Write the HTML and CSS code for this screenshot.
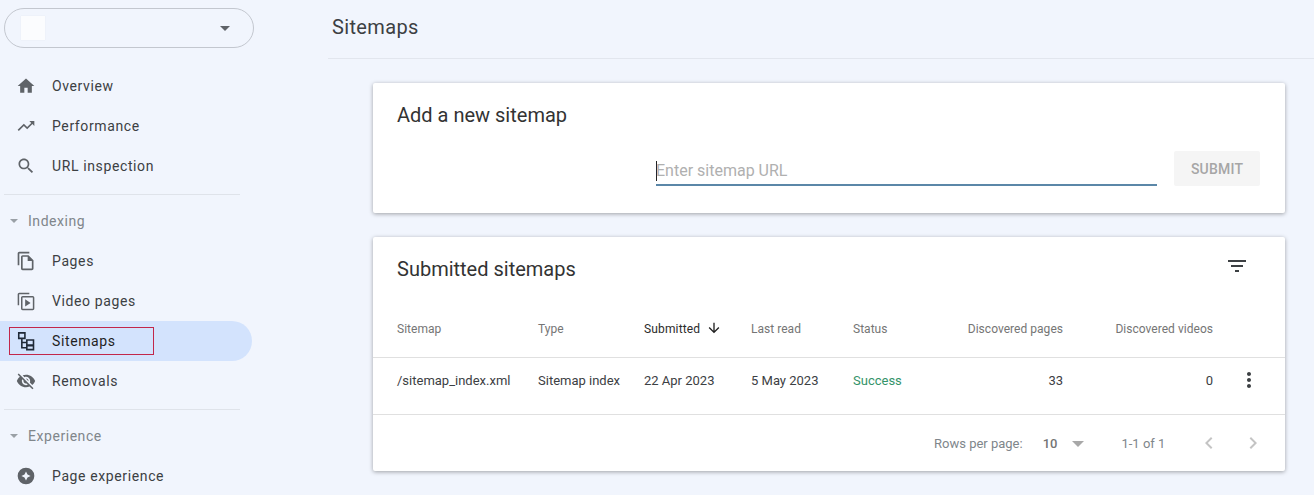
FILE: index.html
```html
<!DOCTYPE html>
<html lang="en">
<head>
<meta charset="utf-8">
<title>Sitemaps</title>
<link rel="stylesheet" href="styles.css">
</head>
<body>
<div class="app">
  <aside class="sidebar">
    <div class="property">
      <span class="logo"></span>
      <span class="caret"></span>
    </div>
    <nav class="nav">
      <a class="item"><svg class="icon" viewBox="0 0 24 24"><path d="M10 20v-6h4v6h5v-8h3L12 3 2 12h3v8z"/></svg>Overview</a>
      <a class="item"><svg class="icon" viewBox="0 0 24 24"><path d="M16 6l2.29 2.29-4.88 4.88-4-4L2 16.59 3.41 18l6-6 4 4 6.3-6.29L22 12V6z"/></svg>Performance</a>
      <a class="item"><svg class="icon" viewBox="0 0 24 24"><path d="M15.5 14h-.79l-.28-.27C15.41 12.59 16 11.11 16 9.5 16 5.91 13.09 3 9.5 3S3 5.91 3 9.5 5.91 16 9.5 16c1.61 0 3.09-.59 4.23-1.57l.27.28v.79l5 4.99L20.49 19l-4.99-5zm-6 0C7.01 14 5 11.99 5 9.5S7.01 5 9.5 5 14 7.01 14 9.5 11.99 14 9.5 14z"/></svg>URL inspection</a>
      <div class="divider"></div>
      <div class="section"><span class="tri"></span>Indexing</div>
      <a class="item"><svg class="icon" viewBox="0 0 24 24"><path d="M16 1H4c-1.1 0-2 .9-2 2v14h2V3h12V1zm-1 4H8c-1.1 0-1.99.9-1.99 2L6 21c0 1.1.89 2 1.99 2H19c1.1 0 2-.9 2-2V11l-6-6zM8 21V7h6v5h5v9H8z"/></svg>Pages</a>
      <a class="item"><svg class="icon" viewBox="0 0 24 24"><path d="M16 2H4c-1.1 0-2 .9-2 2v13h1.800V3.800H16zM20 6H8c-1.1 0-2 .9-2 2v13c0 1.100.9 2 2 2h12c1.100 0 2-.9 2-2V8c0-1.100-.9-2-2-2zm.2 15.200H7.800V7.800h12.400zM11 10v8.500l6.500-4.250z"/></svg>Video pages</a>
      <a class="item active"><svg class="icon icon-tree" viewBox="0 0 24 24"><path d="M3.300 2.200h7.400v6.600H3.300zM7 8.800v11.200h6M7 13.800h6M13 10.800h8v6h-8zM13 17.500h8v4.800h-8z"/></svg>Sitemaps<span class="highlight"></span></a>
      <a class="item"><svg class="icon" viewBox="0 0 24 24"><path d="M12 7c2.76 0 5 2.24 5 5 0 .65-.13 1.26-.36 1.83l2.92 2.92c1.51-1.26 2.7-2.89 3.43-4.75-1.73-4.39-6-7.5-11-7.5-1.4 0-2.74.25-3.98.7l2.16 2.16C10.74 7.13 11.35 7 12 7zM2 4.27l2.28 2.28.46.46C3.08 8.3 1.78 10.02 1 12c1.73 4.39 6 7.5 11 7.5 1.55 0 3.03-.3 4.38-.84l.42.42L19.73 22 21 20.73 3.27 3 2 4.27zM7.53 9.8l1.55 1.55c-.05.21-.08.43-.08.65 0 1.66 1.34 3 3 3 .22 0 .44-.03.65-.08l1.55 1.55c-.67.33-1.41.53-2.2.53-2.76 0-5-2.24-5-5 0-.79.2-1.53.53-2.2zm4.31-.78l3.15 3.15.02-.16c0-1.66-1.34-3-3-3l-.17.01z"/></svg>Removals</a>
      <div class="divider"></div>
      <div class="section"><span class="tri"></span>Experience</div>
      <a class="item"><svg class="icon" viewBox="0 0 24 24"><path fill-rule="evenodd" d="M12 2a10 10 0 1 0 0 20 10 10 0 0 0 0-20zm0 4.500 1.800 3.700 3.700 1.800-3.700 1.800-1.800 3.700-1.800-3.700L6.500 12l3.700-1.800z"/></svg>Page experience</a>
    </nav>
  </aside>
  <main class="main">
    <header class="topbar"><h1 class="page-title">Sitemaps</h1></header>
    <div class="content">
      <section class="card add-card">
        <h2 class="card-title">Add a new sitemap</h2>
        <div class="add-row">
          <div class="field"><span class="cursor"></span><span class="placeholder">Enter sitemap URL</span></div>
          <button class="submit">SUBMIT</button>
        </div>
      </section>
      <section class="card list-card">
        <div class="list-head">
          <h2 class="card-title">Submitted sitemaps</h2>
          <svg class="filter" viewBox="0 0 24 24"><path d="M10 18h4v-2h-4v2zM3 6v2h18V6H3zm3 7h12v-2H6v2z"/></svg>
        </div>
        <div class="row head-row">
          <span>Sitemap</span>
          <span>Type</span>
          <span class="sorted">Submitted<svg class="arrow" viewBox="0 0 24 24"><path d="M20 12l-1.410-1.410L13 16.170V4h-2v12.170l-5.580-5.590L4 12l8 8z"/></svg></span>
          <span>Last read</span>
          <span>Status</span>
          <span class="num">Discovered pages</span>
          <span class="num">Discovered videos</span>
          <span></span>
        </div>
        <div class="row data-row">
          <span>/sitemap_index.xml</span>
          <span>Sitemap index</span>
          <span>22 Apr 2023</span>
          <span>5 May 2023</span>
          <span class="success">Success</span>
          <span class="num">33</span>
          <span class="num">0</span>
          <svg class="more" viewBox="0 0 24 24"><path d="M12 8c1.100 0 2-.9 2-2s-.9-2-2-2-2 .9-2 2 .9 2 2 2zm0 2c-1.100 0-2 .9-2 2s.9 2 2 2 2-.9 2-2-.9-2-2-2zm0 6c-1.100 0-2 .9-2 2s.9 2 2 2 2-.9 2-2-.9-2-2-2z"/></svg>
        </div>
        <div class="pager">
          <span class="rows-label">Rows per page:</span>
          <span class="rows-value">10</span>
          <span class="rows-caret"></span>
          <span class="range">1-1 of 1</span>
          <svg class="chev" viewBox="0 0 24 24"><path d="M15.410 7.410L14 6l-6 6 6 6 1.410-1.410L10.830 12z"/></svg>
          <svg class="chev" viewBox="0 0 24 24"><path d="M10 6L8.590 7.410 13.170 12l-4.580 4.590L10 18l6-6z"/></svg>
        </div>
      </section>
    </div>
  </main>
</div>
</body>
</html>
```

FILE: styles.css
```css
* { box-sizing: border-box; }
html, body { margin: 0; height: 495px; overflow: hidden; }
body { background: #f1f5fd; font-family: Roboto, "Liberation Sans", sans-serif; color: #3c4043; }

.app { display: flex; height: 495px; }

.sidebar { width: 328px; flex: none; padding-top: 8px; }
.property {
  width: 250px; height: 40px; margin-left: 4px; padding: 0 23px 0 16px;
  display: flex; align-items: center; justify-content: space-between;
  border: 1px solid #c3c7cf; border-radius: 20px;
}
.logo { width: 24px; height: 24px; background: #fbfcfe; box-shadow: 0 0 1px #dfe3ea; }
.caret { width: 0; height: 0; border: 5px solid transparent; border-top-color: #5f6368; border-bottom: 0; }

.nav { margin-top: 18px; }
.item {
  position: relative; width: 252px; height: 40px; padding-left: 16px;
  display: flex; align-items: center; gap: 16px;
  font-size: 14px; letter-spacing: .62px; color: #3c4043;
  border-radius: 0 20px 20px 0;
}
.icon { width: 20px; height: 20px; flex: none; fill: #5f6368; }
.active { background: #d3e3fd; color: #1f1f1f; }
.icon-tree { fill: none; stroke: #1f2937; stroke-width: 1.900; }
.highlight { position: absolute; left: 9px; top: 6px; width: 145px; height: 28px; border: 1px solid #c2274a; }

.divider { width: 236px; height: 1px; margin: 8px 0 0 4px; background: #dfe3ea; }
.section {
  height: 46px; padding-left: 10px; padding-top: 6px;
  display: flex; align-items: center; gap: 10px;
  font-size: 14px; letter-spacing: .55px; color: #80868b;
}
.tri { width: 0; height: 0; border: 4.5px solid transparent; border-top-color: #9aa0a6; border-bottom: 0; }

.main { flex: 1; min-width: 0; }
.topbar { height: 59px; padding: 14px 0 0 4px; border-bottom: 1px solid #e2e6ee; }
.page-title { margin: 0; font-size: 20px; line-height: 26px; font-weight: 400; letter-spacing: .35px; color: #3c4043; }
.content { padding: 24px 29px 0 45px; display: flex; flex-direction: column; gap: 24px; }

.card { background: #fff; border-radius: 2px; box-shadow: 0 1px 4px rgba(0,0,0,.35); }
.card-title { margin: 0; font-size: 20px; line-height: 26px; font-weight: 400; color: #333; }

.add-card { height: 130px; padding: 19px 25px 0 24px; }
.add-row { display: flex; justify-content: flex-end; align-items: flex-start; gap: 17px; margin-top: 23px; }
.field {
  width: 501px; height: 35px; padding-top: 11px; display: flex; align-items: center;
  border-bottom: 2px solid #5b87a8;
}
.cursor { width: 1px; height: 20px; background: #222; margin: -4px -1px 0 0; }
.placeholder { font-size: 16px; line-height: 20px; color: #b0b0b0; margin-top: -4px; }
.submit {
  width: 86px; height: 35px; padding: 0; border: 0; border-radius: 2px; background: #f5f5f5;
  font: 500 14px Roboto, sans-serif; color: #a6a6a6; letter-spacing: .2px;
}

.list-card { height: 234px; }
.list-head { height: 72px; padding: 19px 36px 0 24px; display: flex; justify-content: space-between; align-items: flex-start; }
.filter { width: 24px; height: 24px; fill: #3c4043; margin-top: -2px; }

.row {
  display: grid; grid-template-columns: 141px 106px 107px 102px 92px 118px 150px 1fr;
  align-items: center; padding-left: 24px; font-size: 12px; letter-spacing: .03px; border-bottom: 1px solid #e0e0e0;
}
.head-row { height: 49px; padding-bottom: 8px; color: #757575; }
.data-row { height: 57px; padding-bottom: 12px; font-size: 13px; letter-spacing: 0; color: #3c4043; }
.num { text-align: right; }
.sorted { display: flex; align-items: center; gap: 6px; color: #2b2b2b; letter-spacing: .15px; }
.arrow { width: 16px; height: 16px; fill: #212121; margin-top: -3px; }
.success { color: #34936a; }
.more { width: 24px; height: 24px; fill: #3c4043; margin-left: 24px; }

.pager { height: 56px; display: flex; align-items: center; padding: 1px 0 0 561px; font-size: 13px; color: #80868b; }
.rows-value { margin-left: 20px; font-weight: 500; color: #757575; }
.rows-caret { margin-left: 15px; width: 0; height: 0; border: 6px solid transparent; border-top-color: #a8a8a8; border-bottom: 0; }
.range { margin-left: 37px; }
.chev { width: 24px; height: 24px; fill: #c4c4c4; margin-top: -2px; }
.range + .chev { margin-left: 32px; }
.chev + .chev { margin-left: 20px; }
```
